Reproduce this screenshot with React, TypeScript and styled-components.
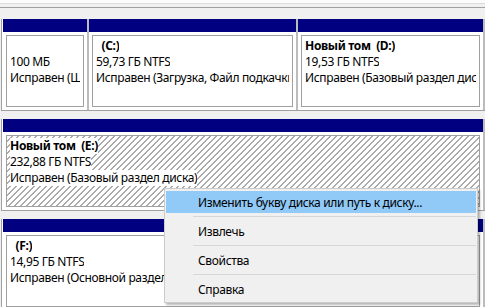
import styled, { createGlobalStyle } from 'styled-components';

const GlobalStyle = createGlobalStyle`
  html, body {
    margin: 0;
    padding: 0;
  }
  body {
    background: #f0f0f0;
    font-family: 'Noto Sans', 'Liberation Sans', sans-serif;
    color: #000;
  }
  * {
    box-sizing: border-box;
  }
`;

const Screen = styled.div`
  position: relative;
  width: 485px;
  height: 307px;
  overflow: hidden;
  background: #f0f0f0;
`;

const TopEdge = styled.div`
  height: 4px;
  background: #fcfcfc;
  border-bottom: 1px solid #dcdcdc;
  margin-bottom: 3px;
`;

const TopRule = styled.div`
  height: 1px;
  background: #a0a0a0;
`;

const DiskList = styled.div`
  display: flex;
  flex-direction: column;
  gap: 8px;
  padding-top: 11px;
`;

const DiskRow = styled.div`
  display: flex;
  margin-left: 1px;
  padding-left: 1px;
  background: #fff;
  border-left: 1px solid #a0a0a0;
  border-bottom: 1px solid #a0a0a0;
`;

const Partition = styled.div<{ $width?: number }>`
  display: flex;
  flex-direction: column;
  flex: ${(p) => (p.$width ? `0 0 ${p.$width + 2}px` : '1 1 auto')};
  min-width: 0;
  border-right: 2px solid #bcbcbc;
`;

const PartitionHeader = styled.div`
  height: 13px;
  background: #000080;
`;

const PartitionBody = styled.div`
  height: 78px;
  padding: 3px;
  background: #fff;
`;

const PartitionInner = styled.div<{ $hatched?: boolean }>`
  height: 100%;
  padding: 2px 3px;
  overflow: hidden;
  border: 1px solid #a0a0a0;
  background: ${(p) =>
    p.$hatched
      ? 'repeating-linear-gradient(135deg, #ffffff 0px, #ffffff 3.1px, #ababab 3.1px, #ababab 4.243px)'
      : '#fff'};
`;

const InfoLine = styled.div<{ $bold?: boolean }>`
  width: fit-content;
  max-width: 100%;
  overflow: hidden;
  white-space: pre;
  font-size: 12px;
  line-height: 16px;
  letter-spacing: -0.35px;
  font-weight: ${(p) => (p.$bold ? 700 : 400)};
  background: #fff;
`;

const ContextMenu = styled.div`
  position: absolute;
  left: 164px;
  top: 188px;
  width: 314px;
  padding: 2px 1px;
  background: #f0f0f0;
  border: 1px solid #cccccc;
  box-shadow: 2px 2px 2px rgba(0, 0, 0, 0.28);
`;

const MenuItem = styled.div<{ $active?: boolean }>`
  display: flex;
  align-items: center;
  height: 22px;
  padding-left: 32px;
  font-size: 12px;
  letter-spacing: -0.35px;
  white-space: nowrap;
  background: ${(p) => (p.$active ? '#91c9f7' : 'transparent')};
`;

const MenuSeparator = styled.div`
  height: 1px;
  margin: 3px 0 3px 27px;
  background: #d7d7d7;
`;

type Volume = {
  title: string;
  size: string;
  status: string;
  width?: number;
  hatched?: boolean;
};

const disks: Volume[][] = [
  [
    { title: ' ', size: '100 МБ', status: 'Исправен (Шифрованный (EFI) системный раздел)', width: 84 },
    { title: '  (C:)', size: '59,73 ГБ NTFS', status: 'Исправен (Загрузка, Файл подкачки, Аварийный дамп)', width: 207 },
    { title: 'Новый том  (D:)', size: '19,53 ГБ NTFS', status: 'Исправен (Базовый раздел диска)' },
  ],
  [{ title: 'Новый том  (E:)', size: '232,88 ГБ NTFS', status: 'Исправен (Базовый раздел диска)', hatched: true }],
  [{ title: '  (F:)', size: '14,95 ГБ NTFS', status: 'Исправен (Основной раздел)' }],
];

const menuItems = ['Изменить букву диска или путь к диску...', 'Извлечь', 'Свойства', 'Справка'];

export default function App() {
  return (
    <Screen>
      <GlobalStyle />
      <TopEdge />
      <TopRule />
      <DiskList>
        {disks.map((volumes, i) => (
          <DiskRow key={i}>
            {volumes.map((v) => (
              <Partition key={v.size} $width={v.width}>
                <PartitionHeader />
                <PartitionBody>
                  <PartitionInner $hatched={v.hatched}>
                    <InfoLine $bold>{v.title}</InfoLine>
                    <InfoLine>{v.size}</InfoLine>
                    <InfoLine>{v.status}</InfoLine>
                  </PartitionInner>
                </PartitionBody>
              </Partition>
            ))}
          </DiskRow>
        ))}
      </DiskList>

      <ContextMenu>
        {menuItems.map((label, i) => (
          <div key={label}>
            {i > 0 && <MenuSeparator />}
            <MenuItem $active={i === 0}>{label}</MenuItem>
          </div>
        ))}
      </ContextMenu>
    </Screen>
  );
}
